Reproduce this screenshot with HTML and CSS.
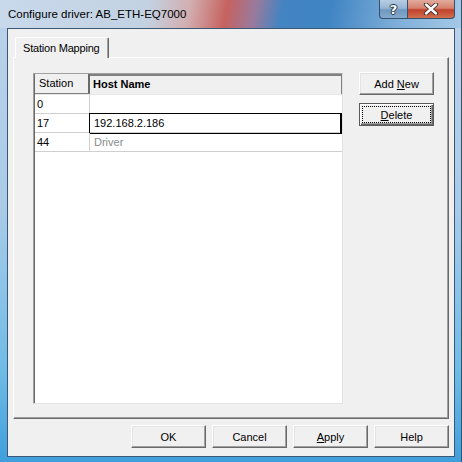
FILE: index.html
```html
<!DOCTYPE html>
<html lang="en">
<head>
    <meta charset="UTF-8">
    <title>Configure driver</title>
    <link rel="stylesheet" href="styles.css">
</head>
<body>
    <div class="window">
        <div class="titlebar">
            <span class="title">Configure driver: AB_ETH-EQ7000</span>
            <div class="caption-buttons">
                <div class="cap-btn help-btn">?</div>
                <div class="cap-btn close-btn">
                    <svg width="16" height="12" viewBox="0 0 16 12">
                        <path d="M3 1.5 L13 10.5 M13 1.5 L3 10.5" stroke="#3a2a2a" stroke-width="4.2" stroke-linecap="round"/>
                        <path d="M3 1.5 L13 10.5 M13 1.5 L3 10.5" stroke="#ffffff" stroke-width="2.4" stroke-linecap="round"/>
                    </svg>
                </div>
            </div>
        </div>
        <div class="frame-body">
            <div class="client">
                <div class="tabs">
                    <div class="tab">Station Mapping</div>
                </div>
                <div class="panel">
                    <div class="grid">
                        <div class="grid-row head">
                            <div class="cell station">Station</div>
                            <div class="cell host">Host Name</div>
                        </div>
                        <div class="grid-row">
                            <div class="cell station">0</div>
                            <div class="cell host"></div>
                        </div>
                        <div class="grid-row">
                            <div class="cell station">17</div>
                            <div class="cell host editing">192.168.2.186</div>
                        </div>
                        <div class="grid-row">
                            <div class="cell station">44</div>
                            <div class="cell host muted">Driver</div>
                        </div>
                    </div>
                    <div class="side-buttons">
                        <button class="btn">Add <u>N</u>ew</button>
                        <button class="btn default"><u>D</u>elete</button>
                    </div>
                </div>
                <div class="footer">
                    <button class="btn">OK</button>
                    <button class="btn">Cancel</button>
                    <button class="btn"><u>A</u>pply</button>
                    <button class="btn">Help</button>
                </div>
            </div>
        </div>
    </div>
</body>
</html>
```

FILE: styles.css
```css
* {
    margin: 0;
    padding: 0;
    box-sizing: border-box;
}

body {
    width: 462px;
    height: 462px;
    overflow: hidden;
    font-family: "Liberation Sans", Arial, sans-serif;
    font-size: 11px;
    color: #000;
}

.window {
    width: 462px;
    height: 462px;
    display: flex;
    flex-direction: column;
    background: linear-gradient(to bottom, #bcd2ea 0%, #a9cbe8 45%, #6fbce6 80%, #3f9fdb 100%);
    border-right: 1px solid #34536f;
}

/* title bar */
.titlebar {
    height: 28px;
    display: flex;
    justify-content: space-between;
    align-items: flex-start;
    padding: 0 6px 0 8px;
    background: linear-gradient(100deg, #c8d9ec 0%, #c3d2e2 32%, #d2aeb0 41%, #c6625f 49%, #9a7a9c 55%, #4384c2 61%, #3f84c3 71%, #7eaed8 86%, #a5c9e6 100%);
}

.title {
    font-size: 11.5px;
    line-height: 14px;
    padding-top: 7px;
    color: #000;
}

.caption-buttons {
    display: flex;
}

.cap-btn {
    height: 19px;
    display: flex;
    align-items: center;
    justify-content: center;
    border: 1px solid #33506e;
    border-top: none;
}

.help-btn {
    width: 28px;
    border-right: none;
    border-radius: 0 0 0 4px;
    background: linear-gradient(to bottom, #b7cde2 0%, #98b6d4 45%, #7097bf 55%, #83a9cf 100%);
    color: #fff;
    font-family: "DejaVu Sans", sans-serif;
    font-weight: bold;
    font-size: 13px;
    text-shadow: 0 0 1px #283848, 1px 0 0 #283848, -1px 0 0 #283848, 0 1px 0 #283848, 0 -1px 0 #283848;
}

.close-btn {
    width: 48px;
    border-radius: 0 0 4px 0;
    background: linear-gradient(to bottom, #e2aa9c 0%, #d5826e 45%, #c0412c 55%, #d0704e 100%);
}

/* client area */
.frame-body {
    flex: 1;
    display: flex;
    padding: 0 6px 5px 7px;
}

.client {
    flex: 1;
    display: flex;
    flex-direction: column;
    background: #f0f0f0;
    border: 1px solid #3a5876;
    padding: 8px 5px 0;
}

.tabs {
    display: flex;
    padding-left: 2px;
}

.tab {
    position: relative;
    z-index: 1;
    width: 94px;
    height: 21px;
    margin-bottom: -1px;
    padding: 4px 0 0 7px;
    background: #f0f0f0;
    border-top: 1px solid #fff;
    border-left: 1px solid #fff;
    border-right: 1px solid #696969;
    box-shadow: inset -1px 0 #a0a0a0;
    border-radius: 2px 2px 0 0;
    letter-spacing: -0.2px;
}

.panel {
    height: 362px;
    display: flex;
    gap: 16px;
    padding: 15px 0 0 19px;
    border: 1px solid;
    border-color: #fff #696969 #696969 #fff;
    box-shadow: inset -1px -1px #a0a0a0;
}

/* station grid */
.grid {
    width: 310px;
    height: 331px;
    background: #fff;
    border: 1px solid;
    border-color: #a0a0a0 #e3e3e3 #e3e3e3 #a0a0a0;
    box-shadow: inset 1px 0 #696969;
    padding-left: 1px;
}

.grid-row {
    display: grid;
    grid-template-columns: 55px 1fr;
    height: 19px;
    border-bottom: 1px solid #cfcfcf;
}

.grid-row.head {
    height: 21px;
    background: #f0f0f0;
    border-bottom: 1px solid #e6e6e6;
}

.cell {
    line-height: 18px;
    white-space: nowrap;
}

.station {
    padding-left: 2px;
    border-right: 1px solid #cfcfcf;
}

.host {
    padding-left: 4px;
}

.head .cell {
    line-height: 19px;
}

.head .station {
    padding-left: 4px;
    border-right: 2px solid #696969;
    border-bottom: 1px solid #808080;
}

.head .host {
    font-weight: bold;
    padding-left: 3px;
    border-top: 2px solid #808080;
    border-right: 1px solid #808080;
    line-height: 17px;
}

.host.editing {
    margin: -1px 0 -1px -1px;
    padding-left: 4px;
    line-height: 19px;
    border: 1px solid #000;
    border-right-width: 2px;
}

.muted {
    color: #8a8a8a;
}

/* buttons */
.side-buttons {
    display: flex;
    flex-direction: column;
    gap: 8px;
    margin-top: -1px;
}

.btn {
    position: relative;
    width: 75px;
    height: 23px;
    font-family: "Liberation Sans", Arial, sans-serif;
    font-size: 11px;
    color: #000;
    background: #f0f0f0;
    border: 1px solid;
    border-color: #fff #696969 #696969 #fff;
    box-shadow: inset -1px -1px #a0a0a0, inset 1px 1px #e3e3e3;
}

.btn.default {
    border: 1px solid #5a5a5a;
    box-shadow: inset 1px 1px #fff, inset -1px -1px #696969, inset -2px -2px #a0a0a0;
}

.btn.default::after {
    content: "";
    position: absolute;
    inset: 2px;
    border: 1px dotted #000;
}

.footer {
    display: flex;
    justify-content: flex-end;
    gap: 6px;
    margin-top: 6px;
}
```
